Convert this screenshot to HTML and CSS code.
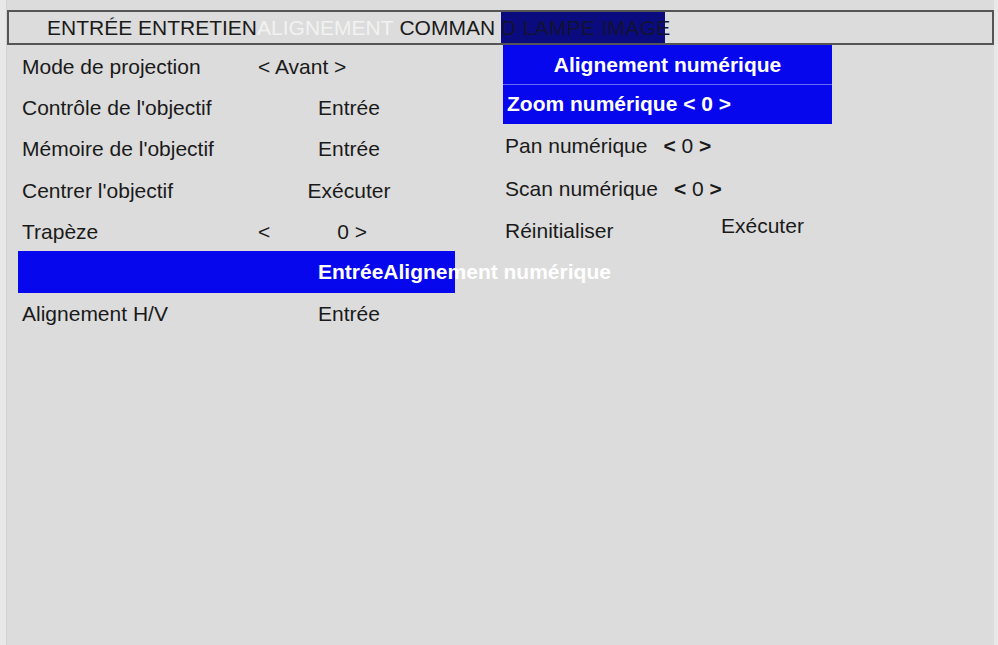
FILE: index.html
```html
<!DOCTYPE html>
<html lang="fr">
<head>
<meta charset="utf-8">
<title>Menu Alignement</title>
<link rel="stylesheet" href="styles.css">
</head>
<body>
<div class="screen">
  <div class="tabbar">
    <span class="tab">ENTRÉE ENTRETIEN</span><span class="tab tab-active">ALIGNEMENT</span><span class="tab">&nbsp;COMMAN</span><span class="tab tab-hl">D LAMPE IMAGE</span>
  </div>
  <div class="content">
    <div class="left">
      <div class="row"><span class="label">Mode de projection</span><span class="val val-left">&lt; Avant &gt;</span></div>
      <div class="row"><span class="label">Contrôle de l'objectif</span><span class="val val-center">Entrée</span></div>
      <div class="row"><span class="label">Mémoire de l'objectif</span><span class="val val-center">Entrée</span></div>
      <div class="row"><span class="label">Centrer l'objectif</span><span class="val val-center">Exécuter</span></div>
      <div class="row"><span class="label">Trapèze</span><span class="val val-split"><span>&lt;</span><span>0 &gt;</span></span></div>
      <div class="row row-sel"><span class="label"></span><span class="val val-sel">EntréeAlignement numérique</span></div>
      <div class="row"><span class="label">Alignement H/V</span><span class="val val-center">Entrée</span></div>
    </div>
    <div class="right">
      <div class="sub-head">Alignement numérique</div>
      <div class="sub-sel">Zoom numérique &lt; 0 &gt;</div>
      <div class="sub-row sub-pan"><span class="sub-label">Pan numérique</span><span class="sub-val"><b>&lt;</b> 0 <b>&gt;</b></span></div>
      <div class="sub-row"><span class="sub-label">Scan numérique</span><span class="sub-val"><b>&lt;</b> 0 <b>&gt;</b></span></div>
      <div class="sub-row sub-reset"><span class="sub-label">Réinitialiser</span><span class="sub-exec">Exécuter</span></div>
    </div>
  </div>
</div>
</body>
</html>
```

FILE: styles.css
```css
html, body {
  margin: 0;
  padding: 0;
}
body {
  background: #e8e8e8;
  font-family: "Liberation Sans", Arial, sans-serif;
  font-size: 21px;
  color: #1a1a1a;
  width: 998px;
  height: 645px;
  overflow: hidden;
}
.screen {
  margin-left: 6px;
  width: 988px;
  height: 645px;
  background: #dcdcdc;
  padding-top: 10px;
  box-sizing: border-box;
  border-left: 1px solid #d2d2d2;
}
.tabbar {
  height: 35px;
  box-sizing: border-box;
  border: 2px solid #555555;
  display: flex;
  align-items: stretch;
  padding-left: 38px;
  white-space: nowrap;
  line-height: 31px;
}
.tab {
  display: block;
  white-space: pre;
}
.tab-active {
  color: #f2f2f2;
}
.tab-hl {
  background: #0b0b80;
  color: #121232;
  width: 164px;
  overflow: visible;
  margin-left: 6px;
  letter-spacing: 0.3px;
}
.content {
  display: flex;
  gap: 48px;
  padding-left: 11px;
}
.left {
  width: 437px;
  display: flex;
  flex-direction: column;
  padding-top: 1px;
}
.row {
  height: 41.3px;
  display: flex;
  align-items: center;
  padding-left: 4px;
  white-space: nowrap;
}
.label {
  width: 236px;
  flex: none;
}
.val {
  width: 182px;
  flex: none;
}
.val-left {
  text-align: left;
}
.val-center {
  text-align: center;
}
.val-split {
  display: flex;
  gap: 67px;
}
.row-sel {
  background: #0707ee;
  margin-top: -1px;
  height: 42px;
}
.val-sel {
  padding-left: 60px;
  font-weight: bold;
  color: #ffffff;
  overflow: visible;
}
.right {
  width: 329px;
  display: flex;
  flex-direction: column;
}
.sub-head {
  height: 40px;
  box-sizing: border-box;
  background: #0707ee;
  color: #ffffff;
  font-weight: bold;
  text-align: center;
  line-height: 40px;
  border-bottom: 1px solid #6a6af2;
}
.sub-sel {
  height: 39px;
  background: #0707ee;
  color: #ffffff;
  font-weight: bold;
  line-height: 38px;
  padding-left: 4px;
}
.sub-row {
  height: 41px;
  display: flex;
  align-items: center;
  padding-left: 2px;
  white-space: nowrap;
}
.sub-pan {
  height: 44px;
}
.sub-val {
  margin-left: 16px;
}
.sub-label {
  flex: none;
}
.sub-reset .sub-label {
  width: 216px;
  padding-top: 2px;
}
.sub-exec {
  padding-bottom: 8px;
}
```
